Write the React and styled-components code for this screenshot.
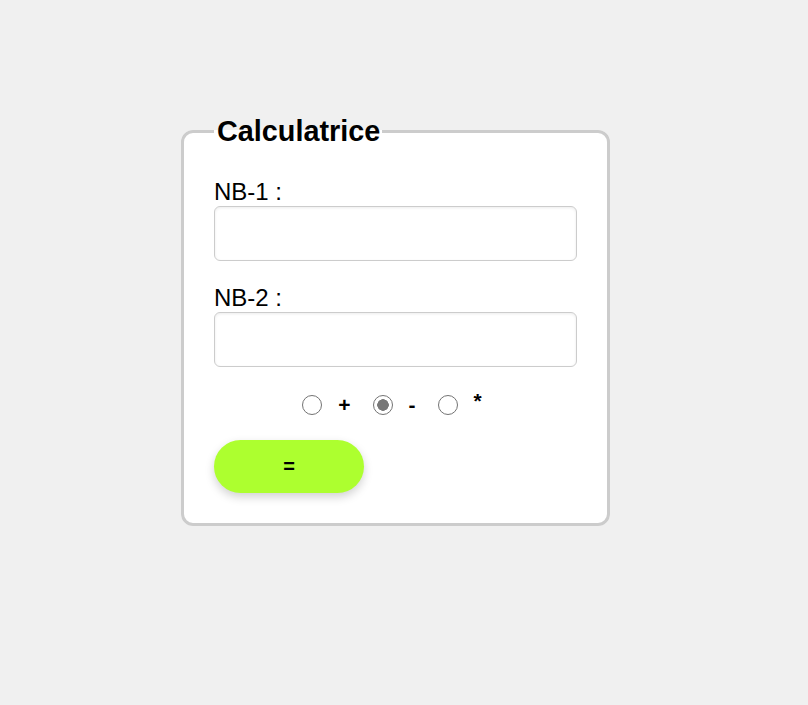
import React, {useState} from 'react';
import styled, {createGlobalStyle} from 'styled-components';

const GlobalStyle = createGlobalStyle`
  html, body {
    margin: 0;
    background: #f0f0f0;
    font-family: "Liberation Sans", Arial, sans-serif;
  }
`;

const Page = styled.div`
  padding: 115px 0 0 181px;
  min-height: 705px;
  box-sizing: border-box;
`;

const Form = styled.fieldset`
  width: 363px;
  margin: 0;
  padding: 30px 30px 30px;
  border: 3px solid #cccccc;
  border-radius: 12px;
  background: #ffffff;
  display: flex;
  flex-direction: column;
`;

const Legend = styled.legend`
  font-size: 28.8px;
  font-weight: bold;
  color: #000;
  padding: 0 2px 0 3px;
`;

const Label = styled.label`
  display: block;
  font-size: 24px;
  color: #000;
`;

const Input = styled.input`
  display: block;
  box-sizing: border-box;
  width: 100%;
  height: 55px;
  margin: 0 0 23px;
  border: 1px solid #cccccc;
  border-radius: 6px;
  box-shadow: inset 0 1px 3px rgba(0, 0, 0, 0.08);
  font-size: 20px;
  padding: 0 10px;
  outline: none;
`;

const Operators = styled.div`
  display: flex;
  align-items: center;
  justify-content: center;
  padding-right: 7px;
  margin: 5px 0 25px;
  height: 20px;
`;

const Radio = styled.input`
  appearance: none;
  box-sizing: border-box;
  width: 20px;
  height: 20px;
  margin: 0;
  border: 1.7px solid #737373;
  border-radius: 50%;
  background: #fff;
  &:checked {
    background: radial-gradient(circle, #787878 0 5.5px, #fff 6px);
  }
`;

const OpLabel = styled.label`
  font-size: 21px;
  font-weight: bold;
  margin: 0 22px 0 16px;
  position: relative;
  top: ${props => props.$raise || 0}px;
  &:last-child {
    margin-right: 0;
  }
`;

const Equals = styled.button`
  width: 150px;
  height: 53px;
  border: none;
  border-radius: 27px;
  background: #adff2f;
  box-shadow: 0 4px 10px rgba(0, 0, 0, 0.18);
  font-family: inherit;
  font-size: 20px;
  font-weight: bold;
  color: #000;
  cursor: pointer;
`;

const ops = [
  {id: 'plus', sign: '+', raise: 0},
  {id: 'moins', sign: '-', raise: 0},
  {id: 'fois', sign: '*', raise: -4},
];

export default function App() {
  const [op, setOp] = useState('moins');
  return (
    <Page>
      <GlobalStyle />
      <Form>
        <Legend>Calculatrice</Legend>
        <Label htmlFor="nb1">NB-1 :</Label>
        <Input id="nb1" type="text" />
        <Label htmlFor="nb2">NB-2 :</Label>
        <Input id="nb2" type="text" />
        <Operators>
          {ops.map(item => (
            <React.Fragment key={item.id}>
              <Radio
                type="radio"
                name="op"
                id={item.id}
                checked={op === item.id}
                onChange={() => setOp(item.id)}
              />
              <OpLabel htmlFor={item.id} $raise={item.raise}>{item.sign}</OpLabel>
            </React.Fragment>
          ))}
        </Operators>
        <div>
          <Equals type="button">=</Equals>
        </div>
      </Form>
    </Page>
  );
}
